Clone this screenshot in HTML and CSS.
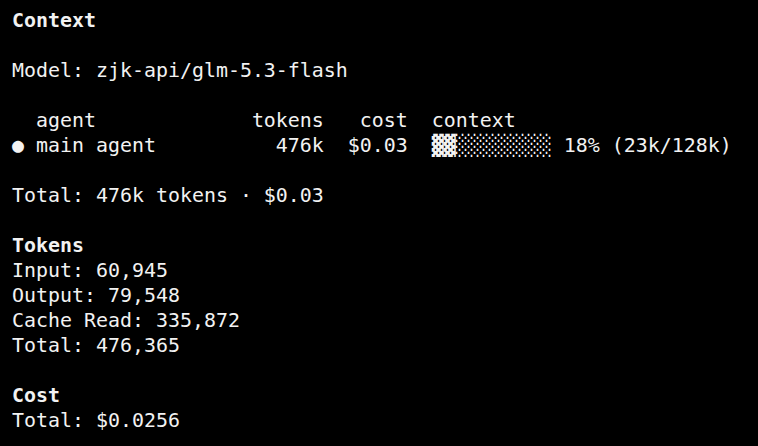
FILE: index.html
```html
<!DOCTYPE html>
<html>
<head>
<meta charset="utf-8">
<link rel="stylesheet" href="styles.css">
</head>
<body>
<div class="term">
<div class="line b">Context</div>
<div class="line"> </div>
<div class="line">Model: zjk-api/glm-5.3-flash</div>
<div class="line"> </div>
<div class="line">  agent             tokens   cost  context</div>
<div class="line"><span class="dot">●</span> main agent          476k  $0.03  <span class="bar">▓▓░░░░░░░░</span> 18% (23k/128k)</div>
<div class="line"> </div>
<div class="line">Total: 476k tokens · $0.03</div>
<div class="line"> </div>
<div class="line b">Tokens</div>
<div class="line">Input: 60,945</div>
<div class="line">Output: 79,548</div>
<div class="line">Cache Read: 335,872</div>
<div class="line">Total: 476,365</div>
<div class="line"> </div>
<div class="line b">Cost</div>
<div class="line">Total: $0.0256</div>
</div>
</body>
</html>
```
FILE: styles.css
```css
html, body {
  margin: 0;
  background: #000;
}
.term {
  padding: 8px 12px;
  font-family: "DejaVu Sans Mono", monospace;
  font-size: 19.93px;
  line-height: 25px;
  color: #f2f2f2;
}
.line {
  white-space: pre;
  height: 25px;
}
.b {
  font-weight: bold;
}
```
